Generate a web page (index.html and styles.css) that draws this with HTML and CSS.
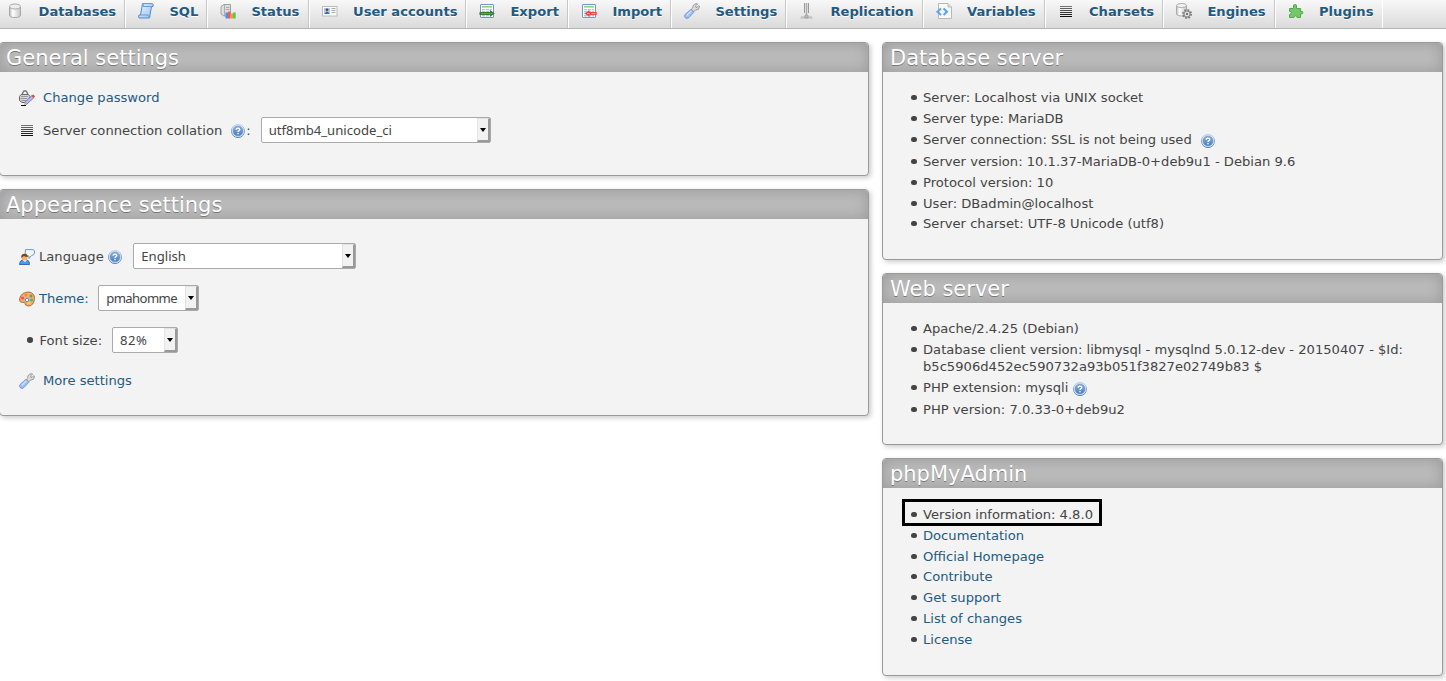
FILE: index.html
```
<!DOCTYPE html>
<html lang="en">
<head>
<meta charset="utf-8">
<title>phpMyAdmin</title>
<link rel="stylesheet" href="styles.css">
</head>
<body>
<svg width="0" height="0" class="defs" aria-hidden="true">
  <defs>
    <linearGradient id="metal"><stop offset="0" stop-color="#bbb"/><stop offset=".3" stop-color="#fff"/><stop offset="1" stop-color="#c4c4c4"/></linearGradient>
    <linearGradient id="blue" x2="1" y2="1"><stop offset="0" stop-color="#edf5ff"/><stop offset="1" stop-color="#94bdf0"/></linearGradient>
    <linearGradient id="helpfill" x2="0" y2="1"><stop offset="0" stop-color="#87aee0"/><stop offset="1" stop-color="#4b7ebd"/></linearGradient>
    <linearGradient id="helpring" x2="0" y2="1"><stop offset="0" stop-color="#b9d0ee"/><stop offset="1" stop-color="#4d7ab4"/></linearGradient>
    <linearGradient id="linesfill" gradientUnits="userSpaceOnUse" x1="0" x2="0" y1="2" y2="14"><stop offset="0" stop-color="#777"/><stop offset="1" stop-color="#000"/></linearGradient>
  </defs>
  <symbol id="wrench" viewBox="0 0 16 16">
    <path d="M7 6.300 9.900 9.200 5 14.500Q3.200 16 1.500 15 -.2 13.500 1 11.500Z" fill="#9dbff5" stroke="#6f93d6" stroke-width=".9"/>
    <path d="M2.800 12.300 7.300 7.800" stroke="#d6e6ff" stroke-width="1.200"/>
    <path d="M7.400 6.200 8.800 4.800Q8.300 1.600 12.500.6L13.600 1 11.800 2.800V4.300L13.200 4.400 14.800 2.600 15.600 3.400Q15.300 7.200 11.300 7.300L9.800 8.700Z" fill="#dcdcdc" stroke="#8f8f8f" stroke-width=".9"/>
  </symbol>
  <symbol id="lines" viewBox="0 0 16 16">
    <path d="M2 2H14V3H2ZM2 4H14V5H2ZM2 6H14V7H2ZM2 8H14V9H2ZM2 10H14V11H2ZM2 12H14V13H2Z" fill="url(#linesfill)"/>
  </symbol>
  <symbol id="sheet" viewBox="0 0 16 16">
    <rect x="1.500" y="1.500" width="13" height="13" rx=".5" fill="#fff" stroke="#7096d0"/>
    <path d="M3 3.800H13" stroke="#8fcb7d" stroke-width="1.500"/>
    <path d="M3 6H13V13.500H3Z" fill="#a9c6ec"/>
    <path d="M3 7.500H13M3 9.500H13M3 11.500H13M6.500 6V14M10.500 6V14" stroke="#f5f9ff" stroke-width=".8"/>
  </symbol>
  <symbol id="help" viewBox="0 0 16 16">
    <circle cx="8" cy="8" r="6.600" fill="#dbe6f4" stroke="url(#helpring)" stroke-width=".9"/>
    <circle cx="8" cy="8" r="5" fill="url(#helpfill)" stroke="#6d96cb" stroke-width=".6"/>
    <path d="M6.200 6.700Q6.200 5.200 8 5.200 9.800 5.200 9.800 6.500 9.800 7.300 8.700 7.900 8 8.300 8 9" fill="none" stroke="#fff" stroke-width="1.300"/>
    <rect x="7.300" y="9.900" width="1.400" height="1.400" fill="#fff"/>
  </symbol>
</svg>

<nav class="topmenu">
  <a class="tab first"><svg class="ic" viewBox="0 0 16 16"><path d="M1.500 4V12Q1.500 14.500 7 14.500T12.500 12V4" fill="url(#metal)" stroke="#a8a8a8"/><ellipse cx="7" cy="3.500" rx="5.500" ry="2.500" fill="#eee" stroke="#aaa"/></svg><span>Databases</span></a>
  <a class="tab w-sql"><svg class="ic" viewBox="0 0 16 16"><path d="M4.500.7H14Q16 .8 15 3.500L13.500 3.500 11.500 15H1Q.3 14.500 1 12H2.500Z" fill="url(#blue)" stroke="#5588c7"/><path d="M4.500.7Q6 2 5.200 3.500H13.500M2.500 12H10Q10.500 13 11.500 15" fill="none" stroke="#6b9bd6"/></svg><span>SQL</span></a>
  <a class="tab w-status"><svg class="ic" viewBox="0 0 16 16"><path d="M1 3.500 4 1.500H10.500V13H4L1 11Z" fill="#dedede" stroke="#a2a2a2"/><path d="M4.500 2V13M6 4.500H9.500M6 6.500H9.500" stroke="#a0a0a0" stroke-width=".8"/><path d="M5.500 9.500H8V15.500H5.500Z" fill="#4d8cff"/><path d="M8 8.500H10.500V15.500H8Z" fill="#ff5a3c"/><path d="M10.500 10.500H13V15.500H10.500Z" fill="#ff9148"/><path d="M13 9.500H15.700V15.500H13Z" fill="#57c94d"/></svg><span>Status</span></a>
  <a class="tab w-users"><svg class="ic" viewBox="0 0 16 16"><rect x=".5" y="3.500" width="14.500" height="9.500" fill="#fbfbfb" stroke="#bcbcbc"/><rect x="2" y="5" width="6" height="6" fill="#a4cbf6"/><circle cx="5" cy="6.800" r="1.400" fill="#75451e"/><path d="M2.500 11Q5 6.500 7.500 11Z" fill="#3669ab"/><path d="M9.500 5.500H13.500M9.500 7.500H13.500M9.500 9.500H13.500" stroke="#aaa"/></svg><span>User accounts</span></a>
  <a class="tab w-export"><svg class="ic" viewBox="0 0 16 16"><use href="#sheet"/><path d="M.5 9H11V7L15.800 10.600 11 13.800V12.100H.5Z" fill="#397b2e"/><path d="M2 10.600H13.500" stroke="#6bae5d" stroke-width=".9"/></svg><span>Export</span></a>
  <a class="tab w-import"><svg class="ic" viewBox="0 0 16 16"><use href="#sheet"/><path d="M15.800 9.100H8.500V7L3.500 10.600 8.500 14V12.100H15.800Z" fill="#f44343"/><path d="M6 10.600H9M10.500 10.600H14.500" stroke="#ffb6b6"/></svg><span>Import</span></a>
  <a class="tab w-settings"><svg class="ic"><use href="#wrench"/></svg><span>Settings</span></a>
  <a class="tab w-repl"><svg class="ic" viewBox="0 0 16 16"><path d="M5.500 0V10L7.500 12.500 9.500 10V0Z" fill="#ddd"/><path d="M5.500 0V10M9.500 0V10" stroke="#999" stroke-width="1"/><path d="M7.500 0V13" stroke="#aaa"/><path d="M2 14H13M1.500 15H13.500" stroke="#b5b5b5"/><path d="M6 12H9V15H6Z" fill="#bbb" stroke="#888" stroke-width=".5"/></svg><span>Replication</span></a>
  <a class="tab w-vars"><svg class="ic" viewBox="0 0 16 16"><path d="M2.500.5H12L15.500 4V15.500H2.500Z" fill="#f8f8f8" stroke="#b9b9b9"/><path d="M12 .5V4H15.500" fill="#ddd" stroke="#bbb"/><path d="M5 5.500 1.500 8.700 5 12M7.500 5.500 11 8.700 7.500 12" fill="none" stroke="#5aa3ee" stroke-width="2"/></svg><span>Variables</span></a>
  <a class="tab w-charsets"><svg class="ic"><use href="#lines" y="1"/></svg><span>Charsets</span></a>
  <a class="tab w-engines"><svg class="ic" viewBox="0 0 16 16"><path d="M.5 2.500V11Q.5 13 5.500 13T10.500 11V2.500" fill="url(#metal)" stroke="#aaa"/><ellipse cx="5.500" cy="2.500" rx="5" ry="2" fill="#f4f4f4" stroke="#aaa"/><circle cx="11" cy="11" r="4.200" fill="#b8b8b8" stroke="#777" stroke-width="1.600" stroke-dasharray="1.650 1.650"/><circle cx="11" cy="11" r="3" fill="#ddd" stroke="#888"/><circle cx="11" cy="11" r="1" fill="#555"/></svg><span>Engines</span></a>
  <a class="tab w-plugins"><svg class="ic" viewBox="0 0 16 16"><path d="M1.500 5.500H5.500V4Q4.800 1.500 7 1.500T8.500 4V5.500H12.500V8.500Q14.800 7.500 14.800 9.500T12.500 11V14.500H9V13.500Q7.500 12 6 13.500V14.500H1.500V11.500Q3.500 10.500 3.500 9.500T1.500 8.500Z" fill="#74c86a" stroke="#55a84d"/></svg><span>Plugins</span></a>
</nav>

<main class="page">
  <div class="column">
    <section class="group general">
      <h2>General settings</h2>
      <div class="row password"><svg class="ic" viewBox="0 0 16 16"><path d="M3.500 5.500V3L5 1H7L8.500 3V5.500" fill="none" stroke="#77777f" stroke-width="1.300"/><path d="M2 4.500H9.500L11 6.500V10L8.500 12.500H3L.5 10.500V6.500Z" fill="#d4d4da" stroke="#666"/><path d="M2 6.500H9M1.500 8.500H8M2.500 10.500H7" stroke="#9a9aa2"/><path d="M5.500 12.500 13 5.500 15 7.500 7.500 14.500Z" fill="#b8b8ff" stroke="#555795" stroke-width=".7"/><path d="M12.500 5.500 14.500 4.500 16 6.500 14.300 8Z" fill="#e54c23"/><path d="M6 12 8 14 5 15Z" fill="#d0aa35"/><path d="M2 15.500H7" stroke="#000"/></svg><a>Change password</a></div>
      <div class="row collation"><svg class="ic"><use href="#lines" y="1"/></svg><span class="label">Server connection collation</span><svg class="ic help"><use href="#help"/></svg><span>:</span><div class="select s-coll"><span>utf8mb4_unicode_ci</span><i></i></div></div>
    </section>
    <section class="group appearance">
      <h2>Appearance settings</h2>
      <div class="row language"><svg class="ic" viewBox="0 0 16 16"><path d="M6.500.6H14Q16 .8 15.500 4 15 6.500 12.500 6.500L10 9.500V7H8Q5.500 6 6.500.6Z" fill="#eef6ff" stroke="#7398cc"/><path d="M.5 15.500Q1 11.500 3 11H8Q10.500 11.500 10.500 15.500Z" fill="#5098ed" stroke="#326cb8"/><path d="M3.500 11 6 13 8 11Z" fill="#fff"/><circle cx="5.500" cy="8.500" r="3" fill="#eeb171"/><path d="M2.500 9Q1.500 5 5 4.700 9 4.500 8.700 8Q6 8 5 7L3.500 8Z" fill="#77451d"/></svg><span>Language</span><svg class="ic help"><use href="#help"/></svg><div class="select s-lang"><span>English</span><i></i></div></div>
      <div class="row theme"><svg class="ic" viewBox="0 0 16 16"><path d="M10 1Q15.500 2 15.500 7.500 15 15 9 15 5.500 14.500 6 12 5.700 11 3.500 11.500.3 11.500.5 8 2 1 10 1Z" fill="#edae78" stroke="#b87032"/><circle cx="7" cy="4" r="1.600" fill="#fa8b35"/><circle cx="3.500" cy="7" r="1.500" fill="#ef5145"/><circle cx="12" cy="5" r="1.500" fill="#5ea958"/><circle cx="12.500" cy="9" r="1.600" fill="#5eb858"/><circle cx="8" cy="9" r="1.700" fill="#fff" stroke="#568bbc"/><circle cx="10" cy="12" r="1.300" fill="#f6cf69"/></svg><a>Theme:</a><div class="select s-theme"><span>pmahomme</span><i></i></div></div>
      <div class="row fontsize"><b class="dot"></b><span>Font size:</span><div class="select s-size"><span>82%</span><i></i></div></div>
      <div class="row more"><svg class="ic"><use href="#wrench"/></svg><a>More settings</a></div>
    </section>
  </div>
  <div class="column">
    <section class="group dbserver">
      <h2>Database server</h2>
      <ul>
        <li>Server: Localhost via UNIX socket</li>
        <li>Server type: MariaDB</li>
        <li class="taller">Server connection: SSL is not being used <svg class="ic help wide"><use href="#help"/></svg></li>
        <li>Server version: 10.1.37-MariaDB-0+deb9u1 - Debian 9.6</li>
        <li>Protocol version: 10</li>
        <li class="shorter">User: DBadmin@localhost</li>
        <li>Server charset: UTF-8 Unicode (utf8)</li>
      </ul>
    </section>
    <section class="group webserver">
      <h2>Web server</h2>
      <ul>
        <li>Apache/2.4.25 (Debian)</li>
        <li>Database client version: libmysql - mysqlnd 5.0.12-dev - 20150407 - $Id: b5c5906d452ec590732a93b051f3827e02749b83 $</li>
        <li class="taller">PHP extension: mysqli <svg class="ic help"><use href="#help"/></svg></li>
        <li>PHP version: 7.0.33-0+deb9u2</li>
      </ul>
    </section>
    <section class="group pma">
      <h2>phpMyAdmin</h2>
      <ul>
        <li><span class="marked">Version information: 4.8.0</span></li>
        <li><a>Documentation</a></li>
        <li class="shorter"><a>Official Homepage</a></li>
        <li><a>Contribute</a></li>
        <li><a>Get support</a></li>
        <li><a>List of changes</a></li>
        <li><a>License</a></li>
      </ul>
    </section>
  </div>
</main>
</body>
</html>
```
FILE: styles.css
```
*, ::before, ::after { box-sizing: border-box; }
body {
  margin: 0;
  height: 681px;
  overflow: hidden;
  background: #fff;
  color: #444;
  font: 13.12px/17px "DejaVu Sans", sans-serif;
}
a { color: #235a81; text-decoration: none; }
.defs { position: absolute; }
.ic { width: 16px; height: 16px; flex: none; display: block; }

/* Top tab bar */
.topmenu {
  display: flex;
  height: 29px;
  border-bottom: 1px solid #b4b4b4;
  background: linear-gradient(#f8f8f8, #dadada);
}
.tab {
  display: flex;
  flex: none;
  padding: 3px 0 0 12px;
  gap: 15.4px;
  border-right: 1px solid #fff;
  box-shadow: inset -1px 0 #c6c6c6;
  font-weight: bold;
  text-shadow: 0 1px 0 #fff;
  white-space: nowrap;
}
.first { width: 126px; padding-left: 8px; gap: 14.6px; }
.w-sql { width: 82px; }
.w-status { width: 102px; }
.w-users { width: 157px; gap: 15px; }
.w-export { width: 102px; }
.w-import { width: 103px; }
.w-settings { width: 115px; }
.w-repl { width: 137px; }
.w-vars { width: 122px; gap: 15px; }
.w-charsets { width: 118px; gap: 15px; }
.w-engines { width: 112px; }
.w-plugins { width: 107px; gap: 15px; box-shadow: none; }

/* Panels */
.page {
  display: grid;
  grid-template-columns: 870px 561px;
  column-gap: 13px;
  margin: 13px 0 0 -1px;
}
.column { display: flex; flex-direction: column; gap: 13px; }
.group {
  border: 1px solid #999;
  border-radius: 4px;
  background: #f3f3f3;
  box-shadow: 2px 2px 5px #ccc;
}
.group h2 {
  height: 29px;
  margin: 0;
  padding: 1px 0 0 6px;
  border-radius: 4px 4px 0 0;
  background: #bbb;
  box-shadow: inset 0 0 15px #999;
  color: #fff;
  font-size: 20.99px;
  font-weight: normal;
  line-height: 28px;
  text-shadow: 0 1px 0 #777;
}
.column + .column h2 { padding-left: 7px; }
.general { height: 134px; }
.appearance { height: 227px; }
.dbserver { height: 218px; }
.webserver { height: 172px; }
.pma { height: 218px; }

/* Settings rows */
.row { display: flex; align-items: center; height: 26px; padding-left: 19px; }
.password { margin-top: 12px; gap: 8px; }
.password .ic, .more .ic, .theme .ic, .language > .ic { margin-top: 1px; }
.collation { margin-top: 7px; }
.collation .help { margin-top: 1px; }
.collation .label { margin: 0 8px; }
.language { margin-top: 24px; }
.language > span, .theme > a { margin: 0 4px; }
.language > span { margin-right: 3px; }
.theme, .fontsize { margin-top: 16px; }
.more { margin-top: 14px; gap: 8px; }
.dot { width: 5.5px; height: 5.5px; margin: 0 7px 0 8px; border-radius: 50%; background: #444; }
.select {
  display: flex;
  justify-content: space-between;
  height: 26px;
  padding: 0 0 0 7px;
  border: 1px solid #aaa;
  border-radius: 2px;
  background: #fff;
  font: 13.12px/24px "Noto Sans", sans-serif;
}
.select i {
  display: flex;
  flex: none;
  align-items: center;
  justify-content: center;
  width: 13px;
  border: solid;
  border-width: 1px 2px 2px 1px;
  border-color: #e3e3e3 #999 #999 #e3e3e3;
  background: #f2f2f2;
}
.select i::before {
  content: "";
  border: 3.5px solid transparent;
  border-top: 4px solid #000;
  border-bottom: 0;
}
.s-coll { width: 230px; margin-left: 10px; }
.s-lang { width: 223px; margin-left: 10px; padding-left: 7.6px; }
.s-theme { width: 101px; margin-left: 5px; padding-left: 7.6px; letter-spacing: -.6px; }
.s-size { width: 66px; margin-left: 10px; letter-spacing: .5px; }

/* Bulleted lists */
ul { margin: 17px 0 0; padding: 0 20px 0 40px; list-style: none; }
.pma ul { margin-top: 18px; }
li { position: relative; margin-bottom: 4px; }
li::before {
  content: "";
  position: absolute;
  left: -11.75px;
  top: 5.7px;
  width: 5.5px;
  height: 5.5px;
  border-radius: 50%;
  background: #444;
}
li .help { display: inline-block; margin: 0 0 -5px; vertical-align: baseline; height: 16px; }
li .wide { margin-left: 4px; }
li.taller { height: 18px; }
li.shorter { margin-bottom: 3px; }

/* Frame around the version line */
.marked { position: relative; }
.marked::after {
  content: "";
  position: absolute;
  left: -21px;
  top: -8px;
  width: 200px;
  height: 27px;
  border: 3px solid #000;
}
```
